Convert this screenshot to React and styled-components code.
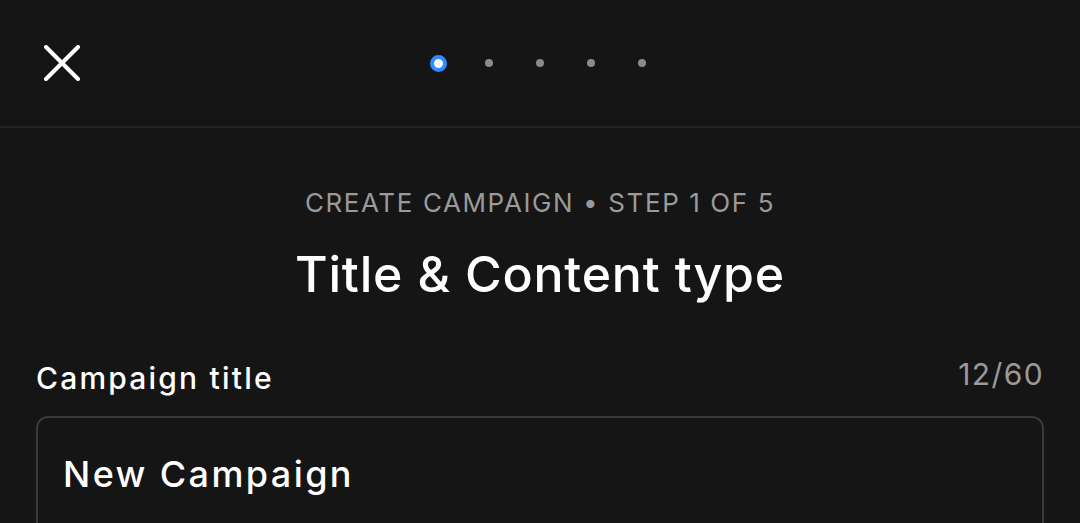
import React, { useState } from "react";
import styled, { createGlobalStyle } from "styled-components";

const GlobalStyle = createGlobalStyle`
  html, body {
    margin: 0;
    padding: 0;
    background: #151515;
  }
  body {
    font-family: "Inter", "Noto Sans", sans-serif;
    color: #fff;
    -webkit-font-smoothing: antialiased;
  }
  * {
    box-sizing: border-box;
  }
`;

const App = () => {
  const [title, setTitle] = useState("New Campaign");
  const steps = [0, 1, 2, 3, 4];
  const active = 0;

  return (
    <StyledPage>
      <GlobalStyle />
      <StyledHeader>
        <StyledCloseButton aria-label="Close">
          <svg viewBox="0 0 36 36" fill="none">
            <path
              d="M2 2L34 34M34 2L2 34"
              stroke="#fff"
              strokeWidth="4"
              strokeLinecap="round"
            />
          </svg>
        </StyledCloseButton>
        <StyledDots>
          {steps.map((s) => (
            <StyledDot key={s} $active={s === active} />
          ))}
        </StyledDots>
      </StyledHeader>

      <StyledBody>
        <StyledEyebrow>Create campaign • Step 1 of 5</StyledEyebrow>
        <StyledHeading>Title &amp; Content type</StyledHeading>

        <StyledFieldHead>
          <StyledLabel>Campaign title</StyledLabel>
          <StyledCounter>{title.length}/60</StyledCounter>
        </StyledFieldHead>
        <StyledInputBox>
          <StyledInput
            value={title}
            maxLength={60}
            onChange={(e) => setTitle(e.target.value)}
          />
        </StyledInputBox>
      </StyledBody>
    </StyledPage>
  );
};

const StyledPage = styled.div`
  min-height: 100vh;
  background: #151515;
`;

const StyledHeader = styled.header`
  position: relative;
  height: 128px;
  display: flex;
  align-items: center;
  justify-content: center;
  border-bottom: 2px solid #232323;
`;

const StyledCloseButton = styled.button`
  position: absolute;
  left: 44px;
  top: 45px;
  width: 36px;
  height: 36px;
  padding: 0;
  background: transparent;
  border: none;
  cursor: pointer;
  svg {
    display: block;
    width: 36px;
    height: 36px;
  }
`;

const StyledDots = styled.div`
  display: flex;
  align-items: center;
  gap: 34px;
`;

const StyledDot = styled.span`
  display: block;
  width: ${(p) => (p.$active ? "17px" : "8px")};
  height: ${(p) => (p.$active ? "17px" : "8px")};
  border-radius: 50%;
  background: ${(p) => (p.$active ? "#fff" : "#8a8a8a")};
  border: ${(p) => (p.$active ? "4.5px solid #2f8bff" : "none")};
  margin: ${(p) => (p.$active ? "0" : "0 4.5px")};
`;

const StyledBody = styled.main`
  padding: 0 36px;
  display: flex;
  flex-direction: column;
`;

const StyledEyebrow = styled.p`
  margin: 58px 0 0;
  text-align: center;
  text-transform: uppercase;
  font-size: 26px;
  line-height: 34px;
  letter-spacing: 1.6px;
  color: #9a9a9a;
`;

const StyledHeading = styled.h1`
  margin: 24px 0 0;
  text-align: center;
  font-size: 50px;
  line-height: 60px;
  font-weight: 500;
  letter-spacing: 0.8px;
  color: #fff;
`;

const StyledFieldHead = styled.div`
  display: flex;
  justify-content: space-between;
  align-items: flex-end;
  margin-top: 50px;
`;

const StyledLabel = styled.label`
  font-size: 30px;
  line-height: 40px;
  font-weight: 500;
  letter-spacing: 2.2px;
  color: #fff;
`;

const StyledCounter = styled.span`
  font-size: 30px;
  line-height: 40px;
  letter-spacing: 1.4px;
  color: #9a9a9a;
  margin-bottom: 4px;
`;

const StyledInputBox = styled.div`
  margin-top: 18px;
  height: 140px;
  border: 2px solid #3a3a3a;
  border-radius: 12px;
  padding: 34px 25px;
`;

const StyledInput = styled.input`
  width: 100%;
  background: transparent;
  border: none;
  outline: none;
  padding: 0;
  font-family: inherit;
  font-size: 36px;
  line-height: 44px;
  font-weight: 500;
  letter-spacing: 2.4px;
  color: #fff;
`;

export default App;
